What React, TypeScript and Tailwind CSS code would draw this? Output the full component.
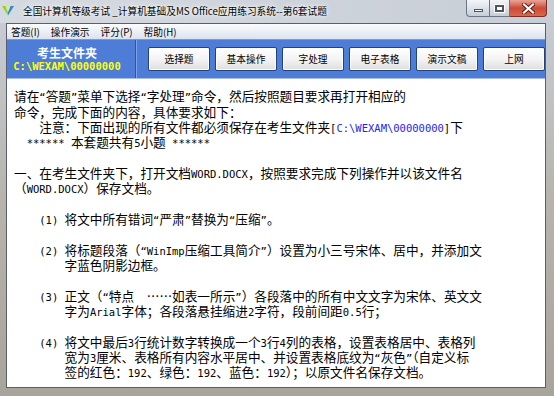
import React from "react";

const MONO = "font-['DejaVu_Sans_Mono',monospace] text-[10.5px]";

function T({ s, className = "" }: { s: string; className?: string }) {
  const parts = s.match(/[\x20-\x7e“”]+|[^\x20-\x7e“”]+/g) || [];
  return (
    <>
      {parts.map((p, i) =>
        /[\x20-\x7e“”]/.test(p[0]) ? (
          <span key={i} className={`${MONO} ${className}`}>
            {p}
          </span>
        ) : (
          <span key={i} className={className}>
            {p}
          </span>
        )
      )}
    </>
  );
}

function Row({ children }: { children?: React.ReactNode }) {
  return <div className="h-[15.33px] leading-[15.33px] whitespace-pre">{children}</div>;
}

const lines: (string | null)[] = [
  "请在“答题”菜单下选择“字处理”命令，然后按照题目要求再打开相应的",
  "命令，完成下面的内容，具体要求如下：",
  "__PATH__",
  "  ****** 本套题共有5小题 ******",
  null,
  "一、在考生文件夹下，打开文档WORD.DOCX，按照要求完成下列操作并以该文件名",
  "（WORD.DOCX）保存文档。",
  null,
  "    (1) 将文中所有错词“严肃”替换为“压缩”。",
  null,
  "    (2) 将标题段落（“WinImp压缩工具简介”）设置为小三号宋体、居中，并添加文",
  "        字蓝色阴影边框。",
  null,
  "    (3) 正文（“特点  ……如表一所示”）各段落中的所有中文文字为宋体、英文文",
  "        字为Arial字体；各段落悬挂缩进2字符，段前间距0.5行；",
  null,
  "    (4) 将文中最后3行统计数字转换成一个3行4列的表格，设置表格居中、表格列",
  "        宽为3厘米、表格所有内容水平居中、并设置表格底纹为“灰色”（自定义标",
  "        签的红色：192、绿色：192、蓝色：192）；以原文件名保存文档。",
];

const buttons = ["选择题", "基本操作", "字处理", "电子表格", "演示文稿", "上网"];
const menus = ["答题(I)", "操作演示", "评分(P)", "帮助(H)"];

export default function App() {
  return (
    <div className="w-[554px] h-[396px] overflow-hidden flex flex-col bg-gradient-to-b from-[#c9cfd8] via-[#b7b4ad] to-[#a8a49c] font-['Noto_Sans_CJK_SC',sans-serif] text-black">
      {/* Title bar */}
      <div className="h-[23px] shrink-0 flex items-start bg-gradient-to-r from-[#d5dae1] to-[#c8ced6]">
        <svg width="12" height="11" viewBox="0 0 12 11" className="ml-[2px] mt-[5px] shrink-0">
          <polygon points="0,1 3.6,1 6,7 6,10.6" fill="#9ccc3c" />
          <polygon points="12,1 8.4,1 6,7 6,10.6" fill="#2f8ad6" />
          <polygon points="3.6,1 6,7 8.4,1 7,1 6,4 5,1" fill="#e3ef7a" />
        </svg>
        <div className="ml-[9px] mt-[4px] text-[9.7px] leading-[14px] whitespace-pre [text-shadow:0_0_6px_#ffffff,0_0_3px_#ffffff]">
          全国计算机等级考试 _计算机基础及MS Office应用练习系统--第6套试题
        </div>
        <div className="flex-1" />
        <div className="flex mr-[7px]">
          <div className="w-[24px] h-[17px] border border-[#6b7584] border-t-0 rounded-bl-[4px] bg-gradient-to-b from-[#f3f5f8] via-[#dde3ea] to-[#c5cdd8] flex items-end justify-center pb-[4px]">
            <div className="w-[9px] h-[3px] bg-white border border-[#4b5563]" />
          </div>
          <div className="w-[20px] h-[17px] border-b border-r border-[#6b7584] bg-gradient-to-b from-[#f3f5f8] via-[#dde3ea] to-[#c5cdd8] flex items-center justify-center">
            <div className="w-[9px] h-[7px] border-2 border-[#4b5563] bg-white outline outline-1 outline-white" />
          </div>
          <div className="w-[37px] h-[17px] border-b border-r border-[#7a3028] rounded-br-[4px] bg-gradient-to-b from-[#e8a497] via-[#cc4a36] to-[#d9684c] flex items-center justify-center">
            <svg width="13" height="11" viewBox="0 0 13 11">
              <path d="M2 1.5 L11 9.5 M11 1.5 L2 9.5" stroke="#5a1a14" strokeWidth="4" strokeLinecap="square" />
              <path d="M2 1.5 L11 9.5 M11 1.5 L2 9.5" stroke="#ffffff" strokeWidth="2.2" strokeLinecap="square" />
            </svg>
          </div>
        </div>
      </div>

      {/* Client */}
      <div className="flex-1 flex ml-[6px] mr-[8px] mb-[8px] min-h-0">
        <div className="flex-1 flex flex-col border border-[#59606b] bg-white min-w-0">
          {/* Menu */}
          <div className="h-[16px] shrink-0 flex items-center gap-[11px] pl-[4px] bg-gradient-to-b from-[#fbfcfd] to-[#dce3ee] border-b border-[#8f99a8] text-[9.7px] leading-[14px]">
            {menus.map((m) => (
              <span key={m}>{m}</span>
            ))}
          </div>
          {/* Toolbar */}
          <div className="h-[39px] shrink-0 flex items-stretch bg-[#4d7dd6] border-b border-[#a7bde6]">
            <div className="w-[129px] pr-[8px] pt-[6px] flex flex-col items-center">
              <div className="text-white font-bold text-[12px] leading-[14px]">考生文件夹</div>
              <div className="text-[#ffff00] font-bold font-['DejaVu_Sans_Mono',monospace] text-[10.5px] leading-[12px]">
                C:\WEXAM\00000000
              </div>
            </div>
            <div className="w-[1px] bg-[#2b56a5]" />
            <div className="w-[1px] bg-[#7fa3e6]" />
            <div className="flex items-center gap-[5px] ml-[11px]">
              {buttons.map((b) => (
                <div
                  key={b}
                  className="w-[62px] h-[24px] flex items-center justify-center rounded-[2px] border border-[#23427c] bg-gradient-to-b from-white via-[#f4f4f4] to-[#dedede] shadow-[inset_0_0_0_1px_#ffffff] text-[9.7px]"
                >
                  {b}
                </div>
              ))}
            </div>
          </div>
          {/* Content */}
          <div className="flex-1 pt-[9.3px] pl-[7px] text-[12.65px] overflow-hidden">
            {lines.map((l, i) =>
              l === null ? (
                <Row key={i} />
              ) : l === "__PATH__" ? (
                <Row key={i}>
                  <T s="    注意：下面出现的所有文件都必须保存在考生文件夹[" />
                  <T s="C:\WEXAM\00000000" className="text-[#2222ff]" />
                  <T s="]下" />
                </Row>
              ) : (
                <Row key={i}>
                  <T s={l} />
                </Row>
              )
            )}
          </div>
        </div>
      </div>
    </div>
  );
}
